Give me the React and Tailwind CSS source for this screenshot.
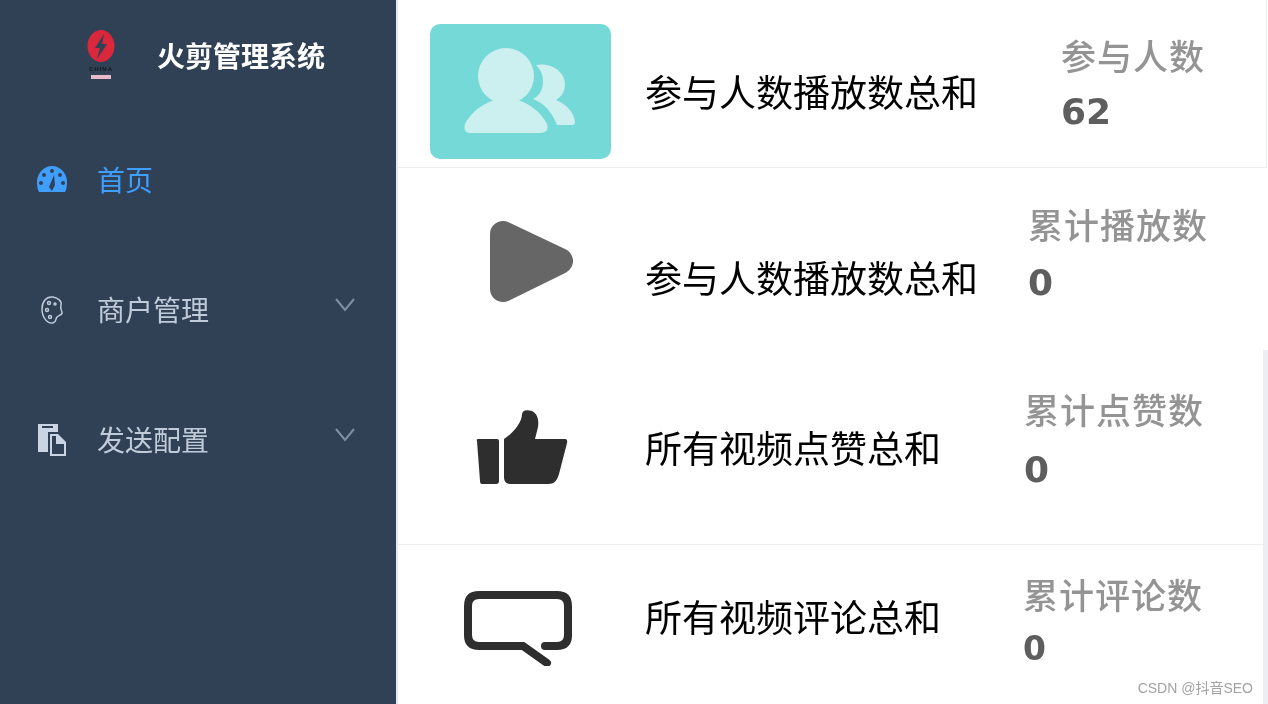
const NAV = [
  { label: '首页', active: true, icon: 'gauge' },
  { label: '商户管理', icon: 'palette', arrow: true },
  { label: '发送配置', icon: 'docs', arrow: true },
];

const ROWS = [
  {
    icon: 'users',
    title: '参与人数播放数总和',
    label: '参与人数',
    value: '62',
    rowCls: 'h-[168px] mr-[1px] border-b border-r border-[#ebeef2]',
    iconCls: 'mt-[24px] ml-[32px]',
    titleCls: 'mt-[76px]',
    statCls: 'mt-[40px] ml-[40px]',
    valueCls: 'mt-[18px] text-[36px]',
  },
  {
    icon: 'play',
    title: '参与人数播放数总和',
    label: '累计播放数',
    value: '0',
    rowCls: 'h-[208px]',
    iconCls: 'mt-[52px] ml-[92px]',
    titleCls: 'mt-[94px]',
    statCls: 'mt-[41px] ml-[7px]',
    valueCls: 'mt-[20px] text-[36px]',
  },
  {
    icon: 'thumb',
    title: '所有视频点赞总和',
    label: '累计点赞数',
    value: '0',
    rowCls: 'h-[169px] border-b border-[#ebeef2]',
    iconCls: 'mt-[33px] ml-[78px]',
    titleCls: 'mt-[56px]',
    statCls: 'mt-[18px] ml-[3px]',
    valueCls: 'mt-[22px] text-[36px]',
  },
  {
    icon: 'comment',
    title: '所有视频评论总和',
    label: '累计评论数',
    value: '0',
    rowCls: 'h-[159px]',
    iconCls: 'mt-[45px] ml-[65px]',
    titleCls: 'mt-[56px]',
    statCls: 'mt-[34px] ml-[2px]',
    valueCls: 'mt-[17px] text-[33px]',
  },
];

const NavIcon = ({ name }) => {
  if (name === 'gauge') {
    return (
      <svg className="mb-[2px]" width="30" height="28" viewBox="0 0 30 28">
        <path d="M2 27 Q0 24 0 17 C0 8 7 1 15 1 C23 1 30 8 30 17 Q30 24 28 27 Z" fill="#409eff" />
        <circle cx="15" cy="6" r="2" fill="#304156" />
        <circle cx="7" cy="10" r="2" fill="#304156" />
        <circle cx="23" cy="10" r="2" fill="#304156" />
        <circle cx="4" cy="18" r="2" fill="#304156" />
        <circle cx="26" cy="18" r="2" fill="#304156" />
        <path d="M17 10 L18 20 L15 26 L12 22 Z" fill="#304156" />
      </svg>
    );
  }
  if (name === 'palette') {
    return (
      <svg width="30" height="30" viewBox="0 0 30 30" fill="none" stroke="#bfcbd9" strokeWidth="1.5">
        <path d="M16 2 C9 1 5 7 5 14 C5 22 10 29 16 28 C20 27 18 24 20 22 C22 20 26 20 25 17 C24 15 23 14 24 10 C25 6 21 3 16 2 Z" />
        <circle cx="12" cy="8" r="1.5" />
        <circle cx="10" cy="15" r="1.5" />
        <circle cx="13" cy="22" r="1.5" />
        <circle cx="18" cy="9" r="1" />
      </svg>
    );
  }
  return (
    <svg width="30" height="34" viewBox="0 0 30 34">
      <path d="M1 1 H21 V9 H11 V29 H1 Z M5 3 V5 H16 V3 Z" fill="#c9d5e4" fillRule="evenodd" />
      <path d="M13 11 H21 L29 19 V33 H13 Z M15 13 V31 H27 V21 H19 V13 Z" fill="#c9d5e4" fillRule="evenodd" />
    </svg>
  );
};

const StatIcon = ({ name }) => {
  if (name === 'users') {
    return (
      <div className="w-[181px] h-[135px] rounded-[10px] bg-[#75d9d7]">
        <svg width="181" height="135" viewBox="0 0 181 135" fill="#cbf0ef">
          <path d="M106 41 C120 38 135 47 135 60 C135 68 131 73 126 76 C136 80 144 88 145 98 C145 100 144 101 142 101 L127 101 C122 88 115 80 103 75 C109 72 113 66 113 58 C113 51 111 46 106 41 Z" />
          <path
            stroke="#75d9d7"
            strokeWidth="5"
            paintOrder="stroke"
            d="M48 52 a28 28 0 1 1 56 0 a28 28 0 1 1 -56 0 Z M40 109 C33 109 33 101 38 95 C45 85 56 78 68 75 L84 75 C98 78 111 88 117 100 C119 106 116 109 110 109 Z"
          />
        </svg>
      </div>
    );
  }
  if (name === 'play') {
    return (
      <svg width="83" height="83" viewBox="0 0 83 83" fill="#666666" stroke="#666666" strokeWidth="26" strokeLinejoin="round">
        <path d="M13 14 L70 41 L13 69 Z" />
      </svg>
    );
  }
  if (name === 'thumb') {
    return (
      <svg width="92" height="76" viewBox="0 0 92 76" fill="#2e2e2e">
        <path d="M1 32 Q0 30 2 30 L21 30 Q23 30 23 32 L23 72 Q23 75 20 75 L6 75 Q4 75 4 72 Z" />
        <path d="M28 30 C40 22 46 12 46 5 C47 0 52 1 56 2 C62 5 63 12 62 18 L59 30 L89 30 Q92 30 91 34 L83 65 C81 72 78 75 72 75 L34 75 C30 75 28 72 28 68 Z" />
      </svg>
    );
  }
  return (
    <svg width="110" height="76" viewBox="0 0 110 76" fill="none" stroke="#2e2e2e" strokeWidth="8" strokeLinecap="round">
      <path d="M84 73 L60 56 L16 56 Q5 56 5 45 L5 16 Q5 5 16 5 L94 5 Q105 5 105 16 L105 45 Q105 56 94 56 L82 56" />
    </svg>
  );
};

export default function App() {
  return (
    <div className="relative flex w-[1268px] h-[704px] overflow-hidden bg-white blur-[0.4px] font-['Liberation_Sans','Noto_Sans_CJK_SC',sans-serif]">
      <aside className="w-[396px] shrink-0 bg-[#304156]">
        <div className="flex items-center h-[115px] pl-[85px]">
          <div className="flex flex-col items-center w-[32px] mb-[6px]">
            <svg width="28" height="33" viewBox="0 0 28 33">
              <ellipse cx="14" cy="16" rx="13.5" ry="16" fill="#d9273c" />
              <path d="M17 4 L8 18 H13 L10 29 L20 14 H15 Z" fill="#304156" />
            </svg>
            <span className="mt-[3px] text-[6px] font-bold leading-none tracking-[1px] text-[#14181d]">CHINA</span>
            <div className="mt-[3px] w-[20px] h-[4px] bg-[#e8b9c8]" />
          </div>
          <span className="ml-[40px] text-[28px] font-bold leading-none text-white">火剪管理系统</span>
        </div>
        <nav>
          {NAV.map((item) => (
            <div key={item.label} className="flex items-center h-[130px] pl-[37px]">
              <div className="w-[60px] shrink-0">
                <NavIcon name={item.icon} />
              </div>
              <span className={`mt-[4px] text-[28px] leading-none ${item.active ? 'text-[#409eff]' : 'text-[#bfcbd9]'}`}>
                {item.label}
              </span>
              {item.arrow && (
                <svg className="ml-auto mr-[41px] mb-[10px]" width="20" height="14" viewBox="0 0 20 14" fill="none" stroke="#7f8ea2" strokeWidth="2">
                  <path d="M1 1 L10 12 L19 1" />
                </svg>
              )}
            </div>
          ))}
        </nav>
      </aside>
      <main className="flex-1 border-l-2 border-[#e6e8ee]">
        {ROWS.map((row) => (
          <section key={row.icon} className={`flex items-start ${row.rowCls}`}>
            <div className="w-[247px] shrink-0">
              <div className={`w-fit ${row.iconCls}`}>
                <StatIcon name={row.icon} />
              </div>
            </div>
            <div className={`w-[376px] shrink-0 text-[37px] leading-[37px] text-black ${row.titleCls}`}>{row.title}</div>
            <div className={row.statCls}>
              <div className="text-[35px] leading-[36px] tracking-[1px] font-medium text-[#949494]">{row.label}</div>
              <div className={`font-['DejaVu_Sans',sans-serif] font-bold leading-none text-[#5e5e5e] ${row.valueCls}`}>{row.value}</div>
            </div>
          </section>
        ))}
      </main>
      <div className="absolute right-0 bottom-0 w-[5px] h-[354px] bg-[#eceef3]" />
      <span className="absolute right-[15px] bottom-[9px] text-[14px] leading-none text-[#a3a3a3]">CSDN @抖音SEO</span>
    </div>
  );
}
